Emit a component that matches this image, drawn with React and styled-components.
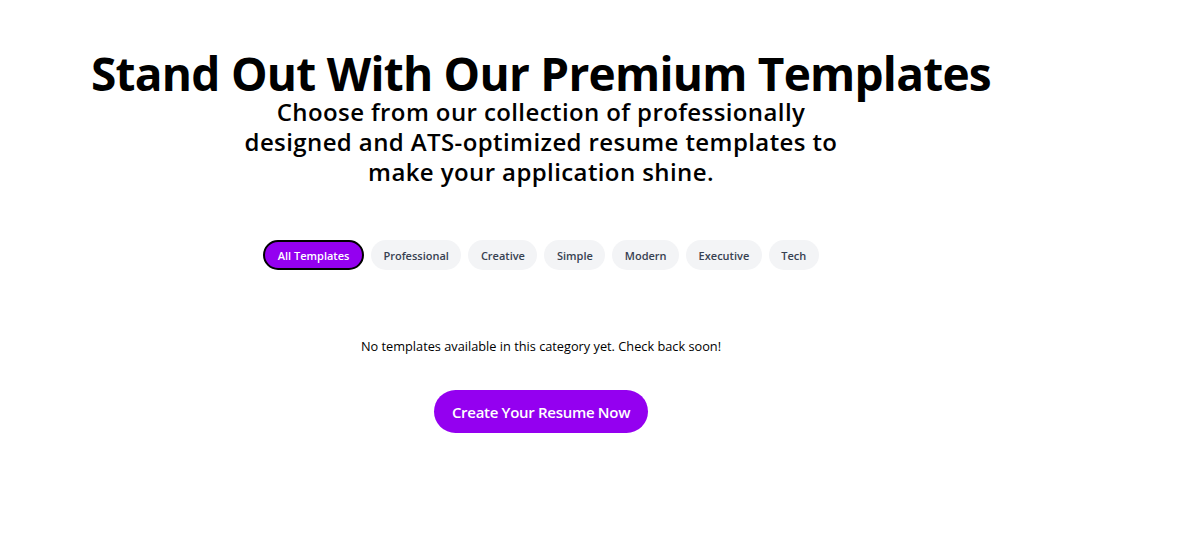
import React, { useState } from 'react'
import styled, { createGlobalStyle } from 'styled-components'

const GlobalStyle = createGlobalStyle`
  body {
    margin: 0;
    background: #ffffff;
    font-family: "Open Sans", "Noto Sans", sans-serif;
    color: #000000;
  }
`

const categories = ['All Templates', 'Professional', 'Creative', 'Simple', 'Modern', 'Executive', 'Tech']

function App() {
  const [active, setActive] = useState('All Templates')

  return (
    <>
      <GlobalStyle />
      <Page>
        <Header>
          <Title>Stand Out With Our Premium Templates</Title>
          <Subtitle>
            Choose from our collection of professionally designed and ATS-optimized resume templates to make your application shine.
          </Subtitle>
        </Header>

        <Filters>
          {categories.map(c => (
            <Pill key={c} active={c === active} onClick={() => setActive(c)}>
              {c}
            </Pill>
          ))}
        </Filters>

        <EmptyText>No templates available in this category yet. Check back soon!</EmptyText>

        <CtaButton>Create Your Resume Now</CtaButton>
      </Page>
    </>
  )
}

export default App

const Page = styled.div`
  width: 1082px;
  display: flex;
  flex-direction: column;
  align-items: center;
  padding-top: 49px;
  text-align: center;
`

const Header = styled.div`
  display: flex;
  flex-direction: column;
  align-items: center;
`

const Title = styled.h1`
  margin: 0;
  font-size: 46px;
  font-weight: 700;
  line-height: 48px;
  letter-spacing: -0.75px;
`

const Subtitle = styled.p`
  margin: 0;
  max-width: 600px;
  font-size: 24px;
  font-weight: 600;
  line-height: 30px;
  letter-spacing: 0.4px;
`

const Filters = styled.div`
  display: flex;
  gap: 7px;
  margin-top: 53px;
`

const Pill = styled.button`
  height: 30px;
  padding: 0 12.5px;
  border-radius: 15px;
  border: ${p => (p.active ? '2px solid #000' : 'none')};
  background: ${p => (p.active ? '#9400f0' : '#f3f4f6')};
  color: ${p => (p.active ? '#ffffff' : '#374151')};
  font-family: "Open Sans", "Noto Sans", sans-serif;
  font-size: 11px;
  font-weight: 600;
  cursor: pointer;
`

const EmptyText = styled.p`
  margin: 67px 0 0;
  font-size: 12.75px;
  line-height: 18px;
`

const CtaButton = styled.button`
  margin-top: 35px;
  height: 43px;
  padding: 0 18px;
  border: none;
  border-radius: 22px;
  background: #9400f0;
  color: #ffffff;
  font-family: "Open Sans", "Noto Sans", sans-serif;
  font-size: 15px;
  font-weight: 600;
  letter-spacing: -0.3px;
  cursor: pointer;
`
